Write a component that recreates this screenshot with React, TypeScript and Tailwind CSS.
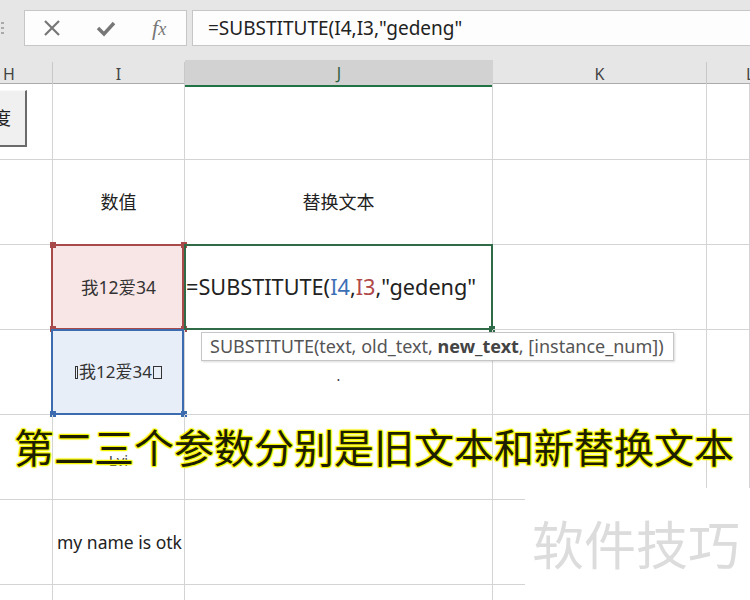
import React from "react";

const GRID = "grid grid-cols-[53px_132px_308px_214px_1fr]";
const cell = "relative border-r border-b border-[#d4d4d4] flex items-center justify-center";

function Corner({ cls }: { cls: string }) {
  return <span className={`absolute w-[6px] h-[6px] ${cls}`} />;
}

function Tofu({ w }: { w: number }) {
  return (
    <span
      className="inline-block h-[13px] border border-[#333] align-[-1px] mx-[1px]"
      style={{ width: w }}
    />
  );
}

export default function App() {
  return (
    <div className="w-[750px] h-[600px] relative overflow-hidden bg-white font-['Noto_Sans','Noto_Sans_CJK_SC',sans-serif] text-[#222]">
      {/* formula bar */}
      <div className="h-[60px] bg-[#e6e6e6] flex items-start pt-[10px]">
        <div className="w-[24px] h-[35px] flex flex-col items-start justify-center gap-[3px] pl-[1px]">
          <span className="w-[3px] h-[2px] bg-[#aaa]" />
          <span className="w-[3px] h-[2px] bg-[#aaa]" />
          <span className="w-[3px] h-[2px] bg-[#aaa]" />
        </div>
        <div className="w-[163px] h-[36px] bg-[#fdfdfd] border border-[#c6c6c6] flex items-center">
          <div className="w-[54px] flex justify-center">
            <svg width="20" height="20" viewBox="0 0 20 20">
              <path d="M3 3 L17 17 M17 3 L3 17" stroke="#777" strokeWidth="2.2" />
            </svg>
          </div>
          <div className="w-[54px] flex justify-center">
            <svg width="20" height="20" viewBox="0 0 20 20">
              <path d="M2 10 L8 16 L18 5" stroke="#777" strokeWidth="3.4" fill="none" />
            </svg>
          </div>
          <div className="w-[54px] flex justify-center">
            <span className="font-['Liberation_Serif',serif] italic text-[22px] text-[#777] leading-none">
              f<span className="text-[18px]">x</span>
            </span>
          </div>
        </div>
        <div className="w-[5px]" />
        <div className="flex-1 h-[36px] bg-[#fdfdfd] border-y border-l border-[#c6c6c6] flex items-center pl-[15px] text-[19px] text-[#222] whitespace-nowrap">
          =SUBSTITUTE(I4,I3,"gedeng"
        </div>
      </div>

      {/* column headers */}
      <div className={`${GRID} h-[24px] bg-[#e6e6e6] border-b border-[#ababab] text-[16px] text-[#444]`}>
        <div className="border-r border-[#c8c8c8] mt-[2px] flex items-center pl-[3px]">H</div>
        <div className="border-r border-[#c8c8c8] mt-[2px] flex items-center justify-center">I</div>
        <div className="bg-[#d2d2d2] border-b-2 border-[#217346] flex items-center justify-center text-[#2f5e3d] -mb-px">J</div>
        <div className="border-r border-[#c8c8c8] mt-[2px] flex items-center justify-center">K</div>
        <div className="mt-[2px] flex items-center pl-[39px]">L</div>
      </div>

      {/* sheet */}
      <div className={`${GRID} grid-rows-[76px_85px_85px_85px_85px_85px_20px] text-[17.5px] text-[#222]`}>
        {/* row 2 */}
        <div className={cell} />
        <div className={cell} />
        <div className={cell} />
        <div className={cell} />
        <div className={cell} />
        {/* row 3 */}
        <div className={cell} />
        <div className={`${cell} text-[18px]`}>数值</div>
        <div className={`${cell} text-[18px]`}>替换文本</div>
        <div className={cell} />
        <div className={cell} />
        {/* row 4 */}
        <div className={cell} />
        <div className={`${cell} bg-[#f8e6e6] text-[17.5px] text-[#333]`}>
          <span>我12爱34</span>
          <div className="absolute -left-[2px] -top-[1px] right-0 -bottom-[1px] border-2 border-[#a94a4a]" />
          <Corner cls="-left-[3px] -top-[3px] bg-[#a94a4a]" />
          <Corner cls="-right-[3px] -top-[3px] bg-[#a94a4a]" />
          <Corner cls="-left-[3px] -bottom-[3px] bg-[#a94a4a]" />
          <Corner cls="-right-[3px] -bottom-[3px] bg-[#a94a4a]" />
        </div>
        <div className={`${cell} !justify-start`}>
          <span className="pl-[1px] text-[21.7px] whitespace-nowrap">
            =SUBSTITUTE(<span className="text-[#3d6fb5]">I4</span>,<span className="text-[#b04848]">I3</span>,"gedeng"
          </span>
          <div className="absolute -left-px -top-[1px] -right-[1px] -bottom-[1px] border-2 border-[#2e6b46]" />
          <Corner cls="-right-[3px] -bottom-[3px] bg-[#2e6b46]" />
        </div>
        <div className={cell} />
        <div className={cell} />
        {/* row 5 */}
        <div className={cell} />
        <div className={`${cell} bg-[#e8eef8] text-[17px] text-[#333]`}>
          <span className="whitespace-nowrap">
            <Tofu w={3} />我12爱34<Tofu w={9} />
          </span>
          <div className="absolute -left-[2px] -top-[1px] right-0 -bottom-[1px] border-2 border-[#3d6bb0]" />
          <Corner cls="-left-[3px] -bottom-[3px] bg-[#3d6bb0]" />
          <Corner cls="-right-[3px] -bottom-[3px] bg-[#3d6bb0]" />
        </div>
        <div className={cell}>
          <span className="text-[14px] pt-[6px] text-[#333]">.</span>
        </div>
        <div className={cell} />
        <div className={cell} />
        {/* row 6 */}
        <div className={cell} />
        <div className={`${cell} text-[15px]`}>
          <span className="pt-[6px] text-[#444]">Lvi</span>
        </div>
        <div className={cell} />
        <div className={cell} />
        <div className={cell} />
        {/* row 7 */}
        <div className={cell} />
        <div className={`${cell} !justify-start pl-[4px]`}>
          <span className="whitespace-nowrap">my name is otk</span>
        </div>
        <div className={cell} />
        <div className={cell} />
        <div className={cell} />
        {/* row 8 */}
        <div className={cell} />
        <div className={cell} />
        <div className={cell} />
        <div className={cell} />
        <div className={cell} />
      </div>

      {/* form button */}
      <div className="absolute left-[-22px] top-[90px] w-[49px] h-[57px] bg-[#f0f0f0] border-t border-l border-[#fafafa] border-r-2 border-b-2 border-r-[#6b6b6b] border-b-[#6b6b6b] flex items-center justify-center text-[18px] text-[#222]">
        度
      </div>

      {/* function tooltip */}
      <div className="absolute left-[201px] top-[332px] w-[473px] h-[29px] bg-white border border-[#c6c6c6] shadow-[1px_1px_2px_rgba(0,0,0,0.15)] flex items-center pl-[8px] text-[18px] text-[#555] whitespace-nowrap">
        SUBSTITUTE(text, old_text,&nbsp;<b className="text-[#444]">new_text</b>, [instance_num])
      </div>

      {/* caption */}
      <div className="absolute left-[14px] top-[420px] text-[40px] leading-[56px] text-[#1e1e00] whitespace-nowrap [text-shadow:0_0_2px_#f6f600,0_0_2px_#f6f600,1px_1px_1px_#f6f600,-1px_-1px_1px_#f6f600,1px_-1px_1px_#f6f600,-1px_1px_1px_#f6f600]">
        第二三个参数分别是旧文本和新替换文本
      </div>

      {/* watermark */}
      <div className="absolute left-[525px] top-[488px] w-[225px] h-[112px] bg-white flex items-center pl-[7px] pt-[2px] text-[52px] text-[#dcdcdc] whitespace-nowrap leading-none">
        软件技巧
      </div>
    </div>
  );
}
